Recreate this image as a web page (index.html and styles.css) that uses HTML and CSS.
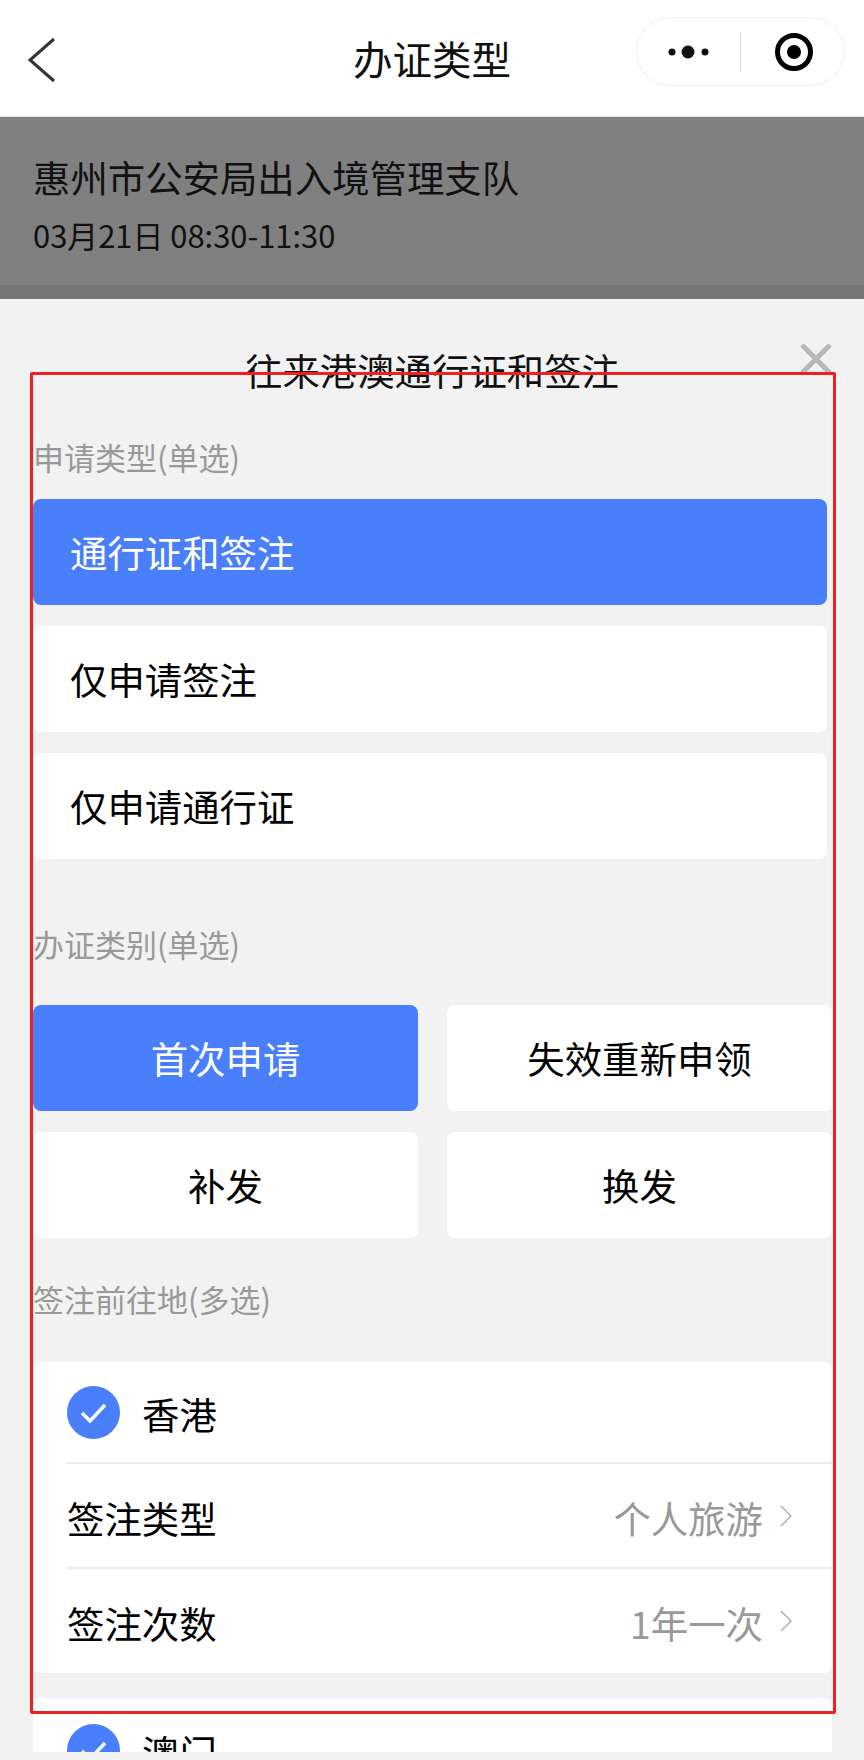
FILE: index.html
```html
<!DOCTYPE html>
<html lang="zh-CN">
<head>
<meta charset="UTF-8">
<meta name="viewport" content="width=device-width, initial-scale=1.0">
<title>办证类型</title>
<link rel="stylesheet" href="styles.css">
</head>
<body>
<div class="page">
  <header class="navbar">
    <svg class="nav-back" width="32" height="46" viewBox="0 0 32 46"><path d="M27 2 L3 23 L27 44" fill="none" stroke="#333" stroke-width="3"/></svg>
    <div class="nav-title">办证类型</div>
    <div class="capsule">
      <svg width="44" height="14" viewBox="0 0 44 14"><circle cx="4" cy="7" r="3.5" fill="#111"/><circle cx="20" cy="7" r="6.5" fill="#111"/><circle cx="37" cy="7" r="3.5" fill="#111"/></svg>
      <span class="capsule-line"></span>
      <svg class="capsule-target" width="38" height="38" viewBox="0 0 38 38"><circle cx="19" cy="19" r="16.5" fill="none" stroke="#000" stroke-width="5"/><circle cx="19" cy="19" r="7" fill="#000"/></svg>
    </div>
  </header>

  <section class="banner">
    <h2 class="banner-name">惠州市公安局出入境管理支队</h2>
    <p class="banner-time">03月21日 08:30-11:30</p>
  </section>

  <main class="panel">
    <div class="panel-head">
      <h1 class="panel-title">往来港澳通行证和签注</h1>
      <svg class="panel-close" width="32" height="30" viewBox="0 0 32 30"><path d="M2 1 L30 29 M30 1 L2 29" stroke="#b8b8b8" stroke-width="5"/></svg>
    </div>

    <div class="panel-body">
      <div class="group-label">申请类型(单选)</div>
      <div class="option-list">
        <div class="option active">通行证和签注</div>
        <div class="option">仅申请签注</div>
        <div class="option">仅申请通行证</div>
      </div>

      <div class="group-label second">办证类别(单选)</div>
      <div class="option-grid">
        <div class="option center active">首次申请</div>
        <div class="option center">失效重新申领</div>
        <div class="option center">补发</div>
        <div class="option center">换发</div>
      </div>

      <div class="group-label third">签注前往地(多选)</div>
      <div class="place-card">
        <div class="place-row">
          <svg class="check" width="53" height="53" viewBox="0 0 53 53"><circle cx="26.5" cy="26.5" r="26.5" fill="#4a7ffb"/><path d="M15 27 L23 35 L38 19" fill="none" stroke="#fff" stroke-width="3.5"/></svg>
          <span>香港</span>
        </div>
        <div class="place-row">
          <span>签注类型</span>
          <span class="place-value">个人旅游</span>
          <svg class="arrow" width="12" height="24" viewBox="0 0 12 24"><path d="M1 2 L11 12 L1 22" fill="none" stroke="#b0b0b0" stroke-width="1.5"/></svg>
        </div>
        <div class="place-row">
          <span>签注次数</span>
          <span class="place-value">1年一次</span>
          <svg class="arrow" width="12" height="24" viewBox="0 0 12 24"><path d="M1 2 L11 12 L1 22" fill="none" stroke="#b0b0b0" stroke-width="1.5"/></svg>
        </div>
      </div>
      <div class="place-card">
        <div class="place-row">
          <svg class="check" width="53" height="53" viewBox="0 0 53 53"><circle cx="26.5" cy="26.5" r="26.5" fill="#4a7ffb"/><path d="M15 27 L23 35 L38 19" fill="none" stroke="#fff" stroke-width="3.5"/></svg>
          <span>澳门</span>
        </div>
      </div>
    </div>
  </main>

  <div class="red-frame"></div>
</div>
</body>
</html>
```

FILE: styles.css
```css
* {
    box-sizing: border-box;
}

body {
    margin: 0;
    font-family: "Noto Sans CJK SC", "Noto Sans", sans-serif;
    color: #000;
}

.page {
    position: relative;
    display: flex;
    flex-direction: column;
    width: 864px;
    height: 1760px;
    overflow: hidden;
    background-color: #f2f2f2;
}

/* top bar */
.navbar {
    position: relative;
    display: flex;
    flex: none;
    align-items: center;
    justify-content: center;
    height: 117px;
    background-color: #fff;
    border-bottom: 1px solid #e4e4e4;
}

.nav-back {
    position: absolute;
    left: 27px;
    top: 37px;
}

.nav-title {
    font-size: 39.5px;
    line-height: 1;
    color: #111;
}

.capsule {
    position: absolute;
    left: 636px;
    top: 17px;
    display: flex;
    align-items: center;
    gap: 28px;
    width: 209px;
    height: 69px;
    padding-left: 31px;
    background-color: #fff;
    border: 1px solid #efefef;
    border-radius: 35px;
}

.capsule-line {
    width: 1px;
    height: 40px;
    background-color: #ddd;
}

.capsule-target {
    margin-left: 6px;
}

/* grey banner */
.banner {
    flex: none;
    height: 182px;
    padding: 36px 33px 0;
    background: linear-gradient(#808080 168px, #767676 168px);
    color: #111;
}

.banner-name {
    margin: 0;
    font-size: 37.4px;
    font-weight: 400;
    line-height: 48px;
}

.banner-time {
    margin: 14px 0 0;
    font-size: 30.9px;
    line-height: 40px;
}

/* bottom panel */
.panel {
    display: flex;
    flex: 1;
    flex-direction: column;
    min-height: 0;
    padding-bottom: 8px;
}

.panel-head {
    position: relative;
    flex: none;
    padding-top: 46px;
    text-align: center;
}

.panel-title {
    margin: 0;
    font-size: 37.4px;
    font-weight: 400;
    line-height: 50px;
    color: #111;
}

.panel-close {
    position: absolute;
    right: 32px;
    top: 45px;
}

.panel-body {
    flex: 1;
    min-height: 0;
    padding: 0 32px 0 33px;
    overflow: hidden;
}

.group-label {
    margin-top: 40px;
    font-size: 31px;
    line-height: 44px;
    color: #999;
}

.group-label.second {
    margin-top: 63px;
}

.group-label.third {
    margin-top: 39px;
}

.option-list {
    display: flex;
    flex-direction: column;
    gap: 21px;
    width: 794px;
    margin-top: 20px;
}

.option-grid {
    display: grid;
    grid-template-columns: 385px 385px;
    gap: 21px 29px;
    margin-top: 39px;
}

.option {
    display: flex;
    align-items: center;
    height: 106px;
    padding-left: 37px;
    font-size: 37.4px;
    background-color: #fff;
    border-radius: 8px;
}

.option.center {
    justify-content: center;
    padding-left: 0;
}

.option.active {
    color: #fff;
    background-color: #4a7ffb;
}

.place-card {
    padding-left: 34px;
    background-color: #fff;
    border-radius: 8px;
}

.group-label + .place-card {
    margin-top: 41px;
    margin-bottom: 25px;
}

.place-row {
    display: flex;
    align-items: center;
    height: 105px;
    padding-right: 40px;
    font-size: 37.4px;
    border-bottom: 2px solid #ececec;
}

.place-row > span {
    margin-top: 4px;
}

.place-row:first-child {
    height: 102px;
}

.place-row:last-child {
    height: 104px;
    border-bottom: none;
}

.check {
    flex: none;
    margin-right: 22px;
}

.place-value {
    margin-left: auto;
    color: #999;
}

.arrow {
    margin-left: 17px;
}

/* red annotation box on top of the screenshot */
.red-frame {
    position: absolute;
    left: 30px;
    top: 372px;
    width: 806px;
    height: 1342px;
    border: 3px solid #f02020;
    border-radius: 2px;
}
```
